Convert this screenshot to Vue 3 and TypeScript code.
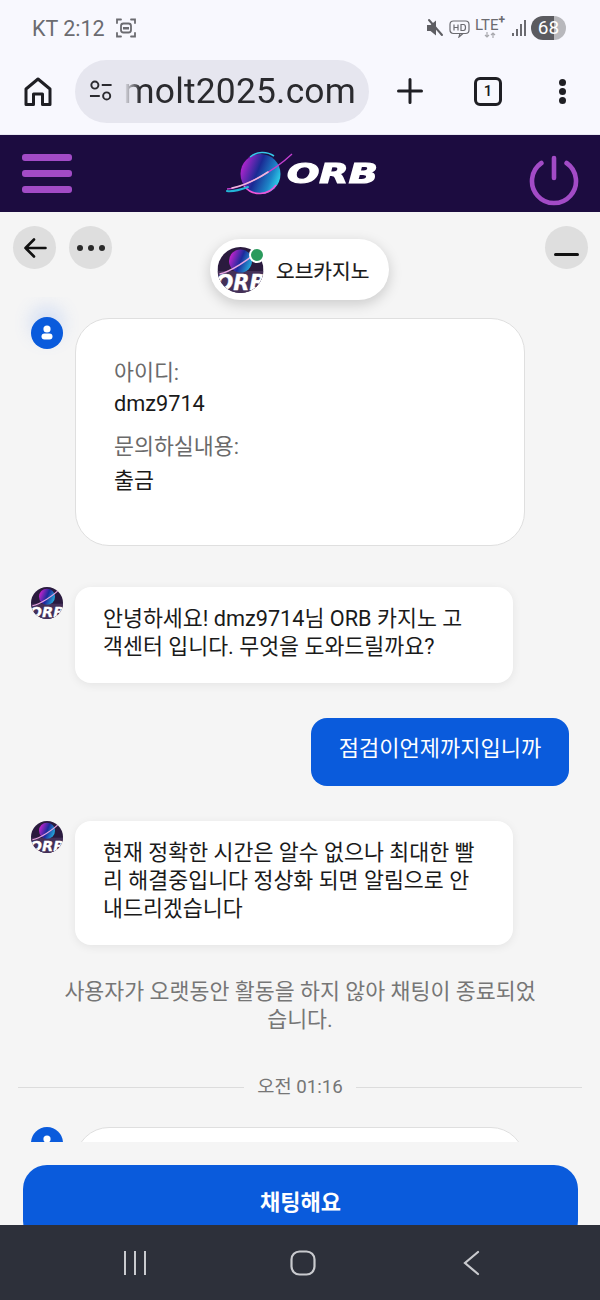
<script setup lang="ts">
const planetId = "orb-logo"
</script>

<template>
  <div class="phone">
    <div class="status-bar">
      <div class="status-left">
        <span>KT 2:12</span>
        <svg width="22" height="22" viewBox="0 0 22 22" fill="none" stroke="#6b6b70" stroke-width="1.8">
          <path d="M2 6V2.5H6M16 2.5H20V6M20 16V19.5H16M6 19.5H2V16" stroke-linecap="round" />
          <rect x="6" y="6.5" width="10" height="9" rx="2.5" />
          <path d="M8 12.5h6v-2.5h-6z" fill="#6b6b70" stroke="none" />
        </svg>
      </div>
      <div class="status-right">
        <svg width="18" height="20" viewBox="0 0 18 20">
          <path d="M1 7h3.5L10 2.5v15L4.5 13H1z" fill="#5e5e63" />
          <path d="M3 2l13 15" stroke="#5e5e63" stroke-width="2" stroke-linecap="round" />
        </svg>
        <svg width="21" height="20" viewBox="0 0 21 20" fill="none" stroke="#6b6b70" stroke-width="1.2">
          <rect x="1" y="3" width="19" height="12.5" rx="3.5" />
          <path d="M11 15.5l-1 3.5 4-3.5" />
          <path d="M5 6.5v6M9 6.5v6M5 9.5h4M12 6.5v6h2.5q2 0 2-3t-2-3z" />
        </svg>
        <div class="lte">
          <span>LTE<sup>+</sup></span>
          <svg width="12" height="6" viewBox="0 0 12 6" stroke="#a8a8ad" stroke-width="1.2" fill="none">
            <path d="M3 0v5M1 3l2 2 2-2M9 6V1M7 3l2-2 2 2" />
          </svg>
        </div>
        <div class="signal"><i class="s1"></i><i class="s2"></i><i class="s3"></i><i class="s4"></i></div>
        <div class="battery">68</div>
      </div>
    </div>

    <div class="browser-bar">
      <svg class="home" width="28" height="29" viewBox="0 0 28 29" fill="none" stroke="#1f1f24" stroke-width="3" stroke-linejoin="round">
        <path d="M2 12L14 2l12 10v15.5h-7.5V17h-9v10.5H2z" />
      </svg>
      <div class="url-pill">
        <svg width="26" height="26" viewBox="0 0 26 26" fill="none" stroke="#2b2b30" stroke-width="2">
          <circle cx="7" cy="7" r="3.6" />
          <path d="M14 7h10M2 18h10" />
          <circle cx="19" cy="18" r="3.6" />
        </svg>
        <div class="url-text">molt2025.com</div>
      </div>
      <svg class="plus" width="26" height="26" viewBox="0 0 26 26" stroke="#1f1f24" stroke-width="3" stroke-linecap="round">
        <path d="M13 1.5v23M1.5 13h23" />
      </svg>
      <div class="tabs">1</div>
      <div class="more"><i></i><i></i><i></i></div>
    </div>

    <header class="site-header">
      <div class="menu"><i></i><i></i><i></i></div>
      <div class="logo">
        <svg width="68" height="46" viewBox="0 0 68 46">
          <defs>
            <linearGradient :id="planetId" x1="0" y1="0.2" x2="1" y2="0.6">
              <stop offset="0" stop-color="#c923d8" />
              <stop offset="0.45" stop-color="#1a2a94" />
              <stop offset="0.8" stop-color="#1d86c8" />
              <stop offset="1" stop-color="#2fd0ea" />
            </linearGradient>
          </defs>
          <circle cx="34.5" cy="23" r="20" :fill="`url(#${planetId})`" />
          <path d="M24 6a20 20 0 0 1 24-1" fill="none" stroke="#35c8e8" stroke-width="1.6" />
          <path d="M18 35a20 20 0 0 0 32-1" fill="none" stroke="#ee55d8" stroke-width="1.6" />
          <path d="M1 38C14 38 46 22 66 3" fill="none" stroke="#c43fd0" stroke-width="1.3" />
          <path d="M6 37C16 35 30 29 42 21" fill="none" stroke="#f0b8dc" stroke-width="1.6" stroke-linecap="round" />
          <path d="M1 40C8 41 14 39 22 36" fill="none" stroke="#23b6d8" stroke-width="2" stroke-linecap="round" />
        </svg>
        <span class="logo-text">ORB</span>
      </div>
      <svg class="power" width="50" height="52" viewBox="0 0 50 52" fill="none" stroke="#a24bc6" stroke-width="4.6" stroke-linecap="round">
        <path d="M12.4 8A22 22 0 1 0 37.6 8" />
        <path d="M25 3v20" />
      </svg>
    </header>

    <main class="chat">
      <div class="toolbar">
        <div class="tool-group">
          <button class="tool">
            <svg width="24" height="22" viewBox="0 0 24 22" fill="none" stroke="#111" stroke-width="2.6" stroke-linecap="round" stroke-linejoin="round">
              <path d="M22.5 11H2.5M11 2.5L2.5 11l8.5 8.5" />
            </svg>
          </button>
          <button class="tool dots"><i></i><i></i><i></i></button>
        </div>
        <button class="tool minimize"><i></i></button>
      </div>

      <div class="agent-pill">
        <div class="pill-avatar">
          <svg width="47" height="46" viewBox="0 0 46 46">
            <defs>
              <clipPath id="avatar-clip"><circle cx="23" cy="23" r="23" /></clipPath>
              <linearGradient id="avatar-planet" x1="0" y1="0.3" x2="1" y2="0.7">
                <stop offset="0" stop-color="#cf22d0" />
                <stop offset="0.5" stop-color="#1c2a9c" />
                <stop offset="1" stop-color="#25b5e0" />
              </linearGradient>
              <symbol id="orb-avatar" viewBox="0 0 46 46">
                <g clip-path="url(#avatar-clip)">
                  <rect width="46" height="46" fill="#2a1a3e" />
                  <rect y="24" width="46" height="22" fill="#443058" />
                  <circle cx="23" cy="14" r="11.5" fill="url(#avatar-planet)" />
                  <path d="M2 27C12 25 32 13 42 2" fill="none" stroke="#e9a6e2" stroke-width="1.5" />
                  <text x="23" y="43" text-anchor="middle" class="avatar-text">ORB</text>
                </g>
              </symbol>
            </defs>
            <use href="#orb-avatar" />
          </svg>
          <span class="online"></span>
        </div>
        <span class="pill-name">오브카지노</span>
      </div>

      <div class="messages">
        <div class="row form-row">
          <div class="user-icon glow">
            <svg width="18" height="18" viewBox="0 0 18 18" fill="#fff">
              <circle cx="9" cy="5" r="3.6" />
              <rect x="3.5" y="9.5" width="11" height="6" rx="3" />
            </svg>
          </div>
          <div class="form-card">
            <div class="label">아이디:</div>
            <div class="value">dmz9714</div>
            <div class="label second">문의하실내용:</div>
            <div class="value last">출금</div>
          </div>
        </div>

        <div class="row">
          <svg class="small-avatar" width="32" height="32" viewBox="0 0 46 46"><use href="#orb-avatar" /></svg>
          <div class="bubble">안녕하세요! dmz9714님 ORB 카지노 고객센터 입니다. 무엇을 도와드릴까요?</div>
        </div>

        <div class="row mine">
          <div class="my-bubble">점검이언제까지입니까</div>
        </div>

        <div class="row">
          <svg class="small-avatar" width="32" height="32" viewBox="0 0 46 46"><use href="#orb-avatar" /></svg>
          <div class="bubble">현재 정확한 시간은 알수 없으나 최대한 빨리 해결중입니다 정상화 되면 알림으로 안내드리겠습니다</div>
        </div>

        <div class="notice">사용자가 오랫동안 활동을 하지 않아 채팅이 종료되었습니다.</div>

        <div class="divider"><span>오전 01:16</span></div>

        <div class="row">
          <div class="user-icon">
            <svg width="18" height="18" viewBox="0 0 18 18" fill="#fff">
              <circle cx="9" cy="5" r="3.6" />
              <rect x="3.5" y="9.5" width="11" height="6" rx="3" />
            </svg>
          </div>
          <div class="form-card"></div>
        </div>
      </div>

      <div class="cta-wrap">
        <button class="cta">채팅해요</button>
      </div>
    </main>

    <nav class="nav-bar">
      <svg width="24" height="24" viewBox="0 0 24 24" stroke="#c9cace" stroke-width="2" fill="none"><path d="M2 0v24M12 0v24M22 0v24" /></svg>
      <svg class="nav-home" width="26" height="26" viewBox="0 0 26 26" stroke="#c9cace" stroke-width="2.2" fill="none"><rect x="1.5" y="1.5" width="23" height="23" rx="8" /></svg>
      <svg class="nav-back" width="18" height="26" viewBox="0 0 18 26" stroke="#c9cace" stroke-width="2.2" fill="none" stroke-linecap="round"><path d="M16 2L3 13l13 11" /></svg>
    </nav>
  </div>
</template>

<style>
html, body {
  margin: 0;
  background: #f5f5f5;
}
</style>

<style scoped>
.phone {
  width: 600px;
  height: 1300px;
  overflow: hidden;
  display: flex;
  flex-direction: column;
  font-family: "Roboto", "Noto Sans CJK KR", sans-serif;
  background: #f5f5f5;
  color: #1a1a1a;
}
i { display: block; }
button { border: none; padding: 0; font-family: inherit; }

.status-bar {
  height: 48px;
  flex: none;
  box-sizing: border-box;
  background: #f8f8fe;
  padding: 8px 34px 0 32px;
  display: flex;
  justify-content: space-between;
  align-items: center;
  color: #6b6b70;
  font-size: 21.5px;
}
.status-left { display: flex; align-items: center; gap: 10px; }
.status-right { display: flex; align-items: center; gap: 5px; }
.lte {
  display: flex;
  flex-direction: column;
  align-items: center;
  font-size: 15px;
  line-height: 14px;
  color: #6b6b70;
}
.lte sup { font-size: 12px; line-height: 0; font-weight: 700; }
.signal { display: flex; align-items: flex-end; gap: 2px; height: 16px; margin-left: 2px; }
.signal i { width: 2px; background: #6b6b70; }
.s1 { height: 3px; }
.s2 { height: 7px; }
.s3 { height: 12px; }
.s4 { height: 16px; }
.battery {
  width: 35px;
  height: 24px;
  border-radius: 12px;
  background: linear-gradient(90deg, #5b5b60 66%, #b8b8bc 66%);
  color: #fff;
  font-size: 19px;
  line-height: 24px;
  text-align: center;
}

.browser-bar {
  height: 87px;
  flex: none;
  box-sizing: border-box;
  background: #f8f8fe;
  border-bottom: 1px solid #e8e8f2;
  display: flex;
  align-items: center;
  padding: 0 0 0 24px;
}
.home { flex: none; }
.url-pill {
  margin-left: 23px;
  width: 294px;
  height: 63px;
  border-radius: 32px;
  background: #e6e6ef;
  display: flex;
  align-items: center;
  box-sizing: border-box;
  padding: 0 13px;
  flex: none;
  overflow: hidden;
}
.url-text {
  margin-left: 10px;
  font-size: 35.4px;
  color: #2a2a2e;
  letter-spacing: 0.2px;
  white-space: nowrap;
  -webkit-mask-image: linear-gradient(90deg, transparent 0, #000 16px);
  mask-image: linear-gradient(90deg, transparent 0, #000 16px);
}
.plus { margin-left: 28px; flex: none; }
.tabs {
  margin-left: 51px;
  width: 22px;
  height: 23px;
  border: 3px solid #1f1f24;
  border-radius: 6px;
  font-size: 15px;
  font-weight: 500;
  line-height: 23px;
  text-align: center;
  flex: none;
}
.more { margin-left: 57px; display: flex; flex-direction: column; gap: 2px; flex: none; }
.more i { width: 7px; height: 7px; border-radius: 50%; background: #1f1f24; }

.site-header {
  height: 77px;
  flex: none;
  box-sizing: border-box;
  background: #1c0c40;
  display: flex;
  align-items: center;
  justify-content: space-between;
  padding: 0 21px 0 22px;
}
.menu { display: flex; flex-direction: column; gap: 9px; }
.menu i { width: 50px; height: 7px; border-radius: 3px; background: #a24bc6; }
.logo { display: flex; align-items: center; width: 149px; flex: none; }
.logo-text {
  font-family: "DejaVu Sans", sans-serif;
  font-weight: 700;
  font-style: italic;
  font-size: 27px;
  line-height: 30px;
  color: #fff;
  -webkit-text-stroke: 1.2px #fff;
  margin-left: -7px;
  transform: scaleX(1.41);
  transform-origin: left;
  width: 88px;
  flex: none;
}
.power { flex: none; margin-top: 15px; }

.chat {
  flex: 1;
  min-height: 0;
  display: flex;
  flex-direction: column;
  position: relative;
}
.toolbar {
  height: 85px;
  flex: none;
  box-sizing: border-box;
  padding: 14px 12px 0 13px;
  display: flex;
  justify-content: space-between;
  align-items: flex-start;
}
.tool-group { display: flex; gap: 13px; }
.tool {
  width: 43px;
  height: 43px;
  border-radius: 50%;
  background: #dedede;
  display: flex;
  align-items: center;
  justify-content: center;
}
.dots { gap: 5px; }
.dots i { width: 6px; height: 6px; border-radius: 50%; background: #2a2a2a; }
.minimize { align-items: flex-end; padding-bottom: 13px; box-sizing: border-box; }
.minimize i { width: 25px; height: 3px; background: #111; border-radius: 2px; }

.agent-pill {
  position: absolute;
  top: 27px;
  left: 210px;
  width: 179px;
  height: 61px;
  box-sizing: border-box;
  border-radius: 31px;
  background: #fff;
  box-shadow: 0 4px 14px rgba(0, 0, 0, 0.18);
  display: flex;
  align-items: center;
  padding-left: 7px;
  gap: 12px;
  z-index: 1;
}
.pill-avatar { position: relative; width: 47px; height: 46px; flex: none; }
.avatar-text {
  font-family: "DejaVu Sans", sans-serif;
  font-weight: 700;
  font-style: italic;
  font-size: 21px;
  fill: #fff;
  stroke: #fff;
  stroke-width: 0.4px;
}
.online {
  position: absolute;
  top: 0;
  right: -1px;
  width: 12px;
  height: 12px;
  border-radius: 50%;
  background: #2a9a5c;
  border: 2px solid #fff;
}
.pill-name { font-size: 20.3px; color: #1a1a1a; -webkit-text-stroke: 0.2px #1a1a1a; }

.messages {
  height: 845px;
  flex: none;
  overflow: hidden;
  display: flex;
  flex-direction: column;
  box-sizing: border-box;
  padding: 21px 31px 0;
}
.row { display: flex; align-items: flex-start; gap: 12px; flex: none; }
.form-row { margin-bottom: 41px; }
.form-row .user-icon { margin-top: -1px; }
.mine { justify-content: flex-end; margin: 35px 0; }
.user-icon {
  width: 32px;
  height: 32px;
  border-radius: 50%;
  background: #0a5bdc;
  display: flex;
  align-items: center;
  justify-content: center;
  flex: none;
}
.glow { box-shadow: 0 -10px 18px rgba(90, 140, 240, 0.22); }
.form-card {
  width: 450px;
  height: 228px;
  box-sizing: border-box;
  background: #fff;
  border: 1px solid #dfdfdf;
  border-radius: 34px;
  padding: 38px;
  font-size: 21.7px;
  flex: none;
}
.label { color: #6a6a6a; line-height: 31px; }
.value { color: #1a1a1a; line-height: 31px; }
.label.second { margin-top: 12px; }
.value.last { margin-top: 3px; }
.small-avatar { flex: none; }
.bubble {
  width: 438px;
  box-sizing: border-box;
  background: #fff;
  border-radius: 16px;
  padding: 18px 38px 22px 28px;
  font-size: 21.7px;
  line-height: 28px;
  word-break: break-all;
  box-shadow: 0 2px 10px rgba(0, 0, 0, 0.07);
}
.my-bubble {
  width: 258px;
  height: 68px;
  box-sizing: border-box;
  background: #0a5bdc;
  color: #fff;
  border-radius: 16px;
  font-size: 22px;
  line-height: 62px;
  text-align: center;
}
.notice {
  margin: 33px 30px 0;
  font-size: 21.7px;
  line-height: 28px;
  color: #767676;
  text-align: center;
  word-break: break-all;
}
.divider {
  display: flex;
  align-items: center;
  margin: 41px -13px 27px;
  gap: 13px;
  font-size: 18.7px;
  line-height: 25px;
  color: #767676;
  flex: none;
}
.divider::before, .divider::after {
  content: "";
  flex: 1;
  height: 1px;
  background: #dcdcdc;
}

.cta-wrap {
  flex: 1;
  box-sizing: border-box;
  padding: 23px 22px 0 23px;
}
.cta {
  display: block;
  width: 100%;
  height: 80px;
  border-radius: 24px;
  background: #0a5bdc;
  color: #fff;
  font-size: 22px;
  font-weight: 700;
  padding-bottom: 10px;
}

.nav-bar {
  height: 75px;
  flex: none;
  background: #2d303a;
  display: flex;
  align-items: center;
  position: relative;
  z-index: 1;
  box-sizing: border-box;
  padding-left: 123px;
}
.nav-home { margin-left: 143px; }
.nav-back { margin-left: 146px; }
</style>
